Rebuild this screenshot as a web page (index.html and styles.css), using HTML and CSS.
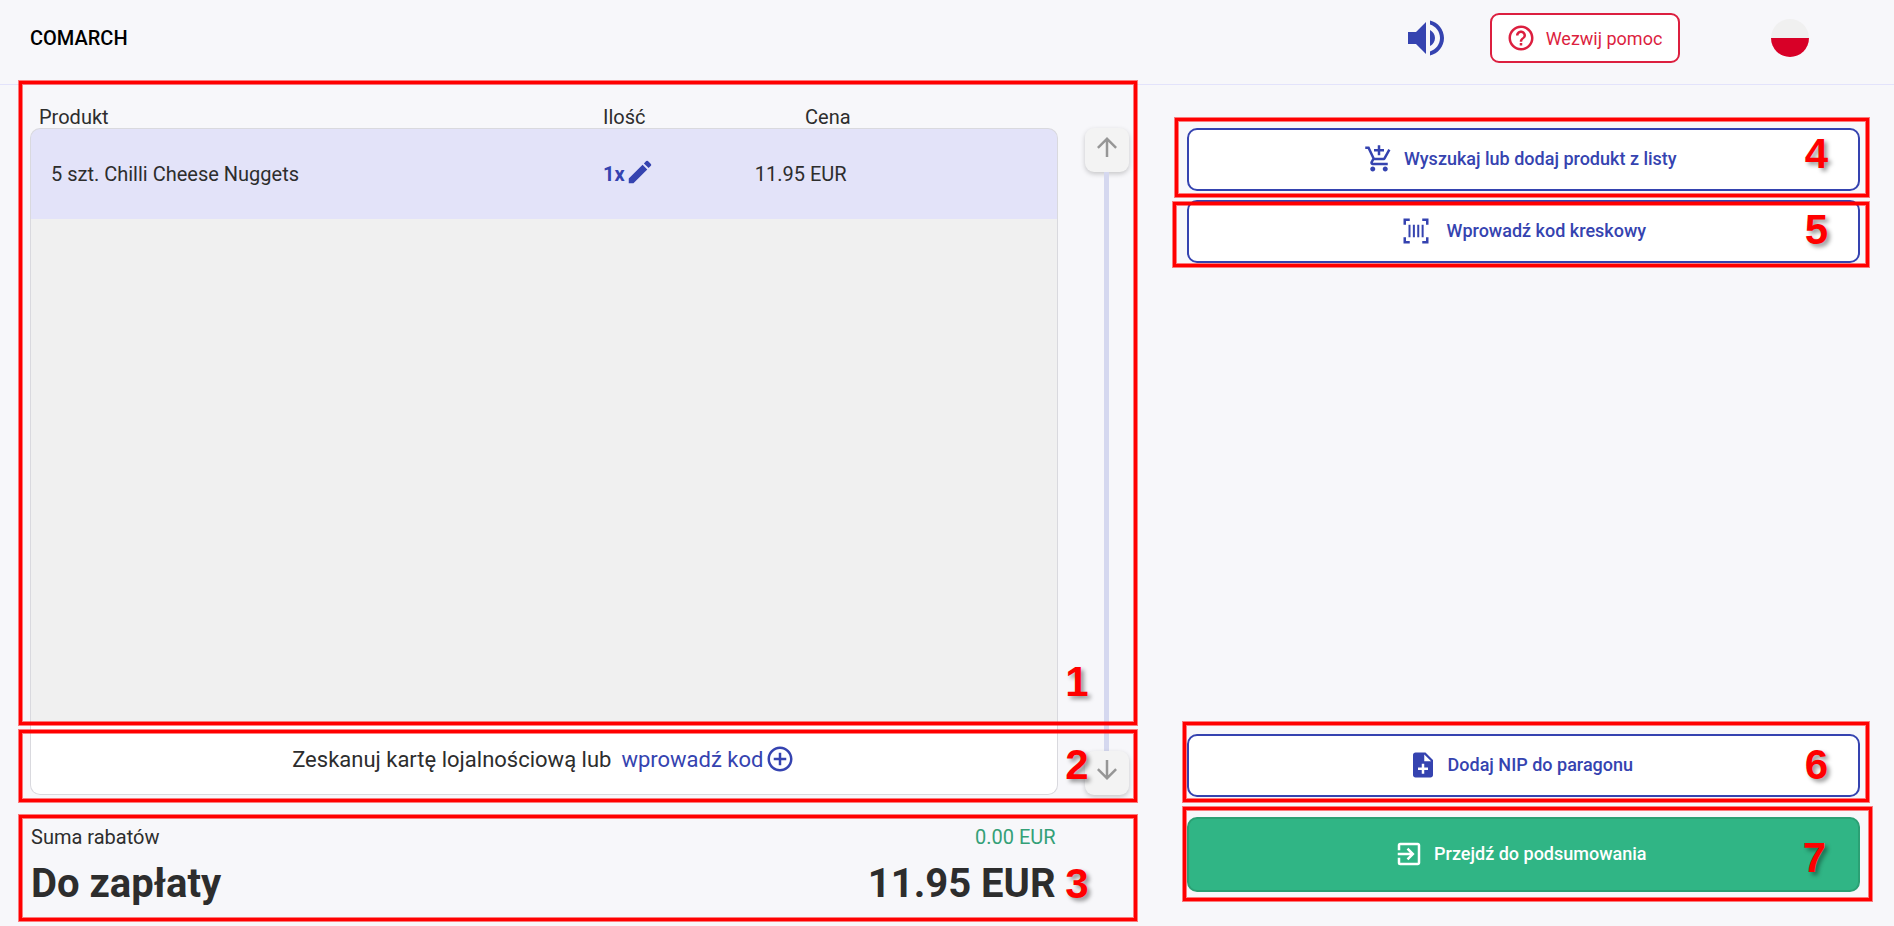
FILE: index.html
```html
<!DOCTYPE html>
<html lang="pl">
<head>
    <meta charset="UTF-8">
    <meta name="viewport" content="width=device-width, initial-scale=1.0">
    <title>Comarch - kasa samoobsługowa</title>
    <link rel="stylesheet" href="styles.css">
</head>
<body>

    <header class="topbar">
        <span class="brand">COMARCH</span>

        <button type="button" class="sound-btn" aria-label="Dźwięk">
            <svg class="icon-sound" viewBox="0 0 24 24"><path d="M3 9v6h4l5 5V4L7 9H3zm13.5 3c0-1.77-1.02-3.29-2.5-4.03v8.05c1.48-.73 2.5-2.25 2.5-4.02zM14 3.23v2.06c2.89.86 5 3.54 5 6.71s-2.11 5.85-5 6.71v2.06c4.01-.91 7-4.49 7-8.77s-2.99-7.86-7-8.77z"/></svg>
        </button>

        <button type="button" class="help-btn">
            <svg class="icon" viewBox="0 0 24 24"><path d="M11 18h2v-2h-2v2zm1-16C6.48 2 2 6.48 2 12s4.48 10 10 10 10-4.48 10-10S17.52 2 12 2zm0 18c-4.41 0-8-3.59-8-8s3.59-8 8-8 8 3.59 8 8-3.59 8-8 8zm0-14c-2.21 0-4 1.79-4 4h2c0-1.1.9-2 2-2s2 .9 2 2c0 2-3 1.75-3 5h2c0-2.25 3-2.5 3-5 0-2.21-1.79-4-4-4z"/></svg>
            Wezwij pomoc
        </button>

        <button type="button" class="flag-btn" aria-label="Polski"></button>
    </header>

    <main class="checkout">
        <section class="receipt">
            <div class="basket">
                <div class="list">
                    <table class="products">
                        <thead>
                            <tr>
                                <th class="name">Produkt</th>
                                <th class="qty">Ilość</th>
                                <th class="price">Cena</th>
                            </tr>
                        </thead>
                        <tbody>
                            <tr>
                                <td class="name">5 szt. Chilli Cheese Nuggets</td>
                                <td class="qty">
                                    <button type="button" class="qty-btn">1x<svg class="icon" viewBox="0 0 24 24"><path d="M3 17.25V21h3.75L17.81 9.94l-3.75-3.75L3 17.25zM20.71 7.04a1 1 0 0 0 0-1.41l-2.34-2.34a1 1 0 0 0-1.41 0l-1.83 1.83 3.75 3.75 1.83-1.83z"/></svg></button>
                                </td>
                                <td class="price">11.95 EUR</td>
                            </tr>
                        </tbody>
                    </table>
                    <div class="empty"></div>
                    <div class="loyalty">
                        Zeskanuj kartę lojalnościową lub
                        <a href="#" class="loyalty-link">wprowadź kod<svg class="icon" viewBox="0 0 24 24"><path d="M13 7h-2v4H7v2h4v4h2v-4h4v-2h-4V7zm-1-5C6.48 2 2 6.48 2 12s4.48 10 10 10 10-4.48 10-10S17.52 2 12 2zm0 18c-4.41 0-8-3.59-8-8s3.59-8 8-8 8 3.59 8 8-3.59 8-8 8z"/></svg></a>
                    </div>
                </div>

                <div class="scroller">
                    <button type="button" class="scroll-btn" aria-label="W górę">
                        <svg class="icon" viewBox="0 0 24 24"><path d="M4 12l1.41 1.41L11 7.83V20h2V7.83l5.58 5.59L20 12l-8-8-8 8z"/></svg>
                    </button>
                    <div class="track"></div>
                    <button type="button" class="scroll-btn" aria-label="W dół">
                        <svg class="icon" viewBox="0 0 24 24"><path d="M20 12l-1.41-1.41L13 16.17V4h-2v12.17l-5.58-5.59L4 12l8 8 8-8z"/></svg>
                    </button>
                </div>

                <div class="callout callout-1"><span>1</span></div>
                <div class="callout callout-2"><span>2</span></div>
            </div>

            <div class="totals">
                <div class="total-row discount">
                    <span>Suma rabatów</span>
                    <span class="amount">0.00 EUR</span>
                </div>
                <div class="total-row to-pay">
                    <span>Do zapłaty</span>
                    <span class="amount">11.95 EUR</span>
                </div>
                <div class="callout callout-3"><span>3</span></div>
            </div>
        </section>

        <section class="actions">
            <div class="action">
                <button type="button" class="action-btn">
                    <svg class="icon" viewBox="0 0 24 24"><path d="M11 9h2V6h3V4h-3V1h-2v3H8v2h3v3zm-4 9c-1.1 0-1.99.9-1.99 2S5.9 22 7 22s2-.9 2-2-.9-2-2-2zm10 0c-1.1 0-1.99.9-1.99 2s.89 2 1.99 2 2-.9 2-2-.9-2-2-2zm-9.83-3.25l.03-.12.9-1.63h7.45c.75 0 1.41-.41 1.75-1.03l3.86-7.01L19.42 4h-.01l-1.1 2-2.76 5H8.53l-.13-.27L6.16 6l-.95-2-.94-2H1v2h2l3.6 7.59-1.35 2.45c-.16.28-.25.61-.25.96 0 1.1.9 2 2 2h12v-2H7.42c-.13 0-.25-.11-.25-.25z"/></svg>
                    Wyszukaj lub dodaj produkt z listy
                </button>
                <div class="callout callout-4"><span>4</span></div>
            </div>
            <div class="action">
                <button type="button" class="action-btn barcode">
                    <svg class="icon" viewBox="0 0 24 24"><path d="M2 2h5v2H4v3H2zM17 2h5v5h-2V4h-3zM2 17h2v3h3v2H2zM20 17h2v5h-5v-2h3zM6 7h1.600v10H6zM9.500 7h1.600v10H9.500zM13 7h1.600v10H13zM16.500 7h1.600v10h-1.600z"/></svg>
                    Wprowadź kod kreskowy
                </button>
                <div class="callout callout-5"><span>5</span></div>
            </div>
            <div class="action bottom">
                <button type="button" class="action-btn">
                    <svg class="icon" viewBox="0 0 24 24"><path d="M14 2H6c-1.100 0-1.990.9-1.990 2L4 20c0 1.100.89 2 1.990 2H18c1.100 0 2-.9 2-2V8l-6-6zm2 14h-3v3h-2v-3H8v-2h3v-3h2v3h3v2zm-3-7V3.500L18.500 9H13z"/></svg>
                    Dodaj NIP do paragonu
                </button>
                <div class="callout callout-6"><span>6</span></div>
            </div>
            <div class="action summary">
                <button type="button" class="action-btn primary">
                    <svg class="icon" viewBox="0 0 24 24"><path d="M10.090 15.590L11.500 17l5-5-5-5-1.410 1.410L12.670 11H3v2h9.670l-2.580 2.590zM19 3H5a2 2 0 0 0-2 2v4h2V5h14v14H5v-4H3v4a2 2 0 0 0 2 2h14c1.100 0 2-.9 2-2V5c0-1.100-.9-2-2-2z"/></svg>
                    Przejdź do podsumowania
                </button>
                <div class="callout callout-7"><span>7</span></div>
            </div>
        </section>
    </main>

</body>
</html>
```
FILE: styles.css
```css
* {
    box-sizing: border-box;
}

body {
    display: flex;
    flex-direction: column;
    min-height: 100vh;
    margin: 0;
    font-family: Roboto, sans-serif;
    font-size: 20px;
    color: #2d2d2d;
    background-color: #f7f7fa;
}

button {
    font-family: inherit;
    cursor: pointer;
}

.icon {
    width: 30px;
    height: 30px;
    fill: currentColor;
    flex-shrink: 0;
}

/* top bar */
.topbar {
    display: flex;
    align-items: center;
    height: 85px;
    padding: 0 85px 8px 30px;
    border-bottom: 1px solid #e3e3fb;
}

.brand {
    margin-right: auto;
    font-weight: 500;
    color: #000;
}

.sound-btn {
    padding: 0;
    border: none;
    background: none;
    color: #3543b0;
}

.icon-sound {
    display: block;
    width: 48px;
    height: 48px;
    fill: currentColor;
}

.help-btn {
    display: flex;
    align-items: center;
    justify-content: center;
    gap: 10px;
    width: 190px;
    height: 50px;
    margin: 0 91px 0 40px;
    padding: 0 2px 0 0;
    border: 2px solid #dc1f3f;
    border-radius: 9px;
    background-color: #fff;
    color: #dc1f3f;
    font-size: 18px;
}

.flag-btn {
    width: 38px;
    height: 38px;
    padding: 0;
    border: none;
    border-radius: 50%;
    background: linear-gradient(#f0f0f0 50%, #d80027 50%);
}

/* main area */
.checkout {
    flex: 1;
    display: grid;
    grid-template-columns: 62fr 38fr;
    gap: 58px;
    padding: 0 34px 0 30px;
}

.receipt {
    display: flex;
    flex-direction: column;
}

.basket {
    position: relative;
    flex: 1;
    display: flex;
    gap: 27px;
}

.list {
    flex: 1;
    display: flex;
    flex-direction: column;
}

.products {
    width: 100%;
    table-layout: fixed;
    border-spacing: 0;
}

.products th {
    height: 43px;
    padding: 0;
    font-weight: 400;
    text-align: left;
    vertical-align: bottom;
    line-height: 22px;
}

.products td {
    height: 91px;
    padding: 0;
    border-top: 1px solid #d9d9de;
    background-color: #e3e3f9;
}

.products .name {
    width: 573px;
    padding-left: 9px;
}

.products .qty {
    width: 13%;
}

.products .price {
    padding-right: 207px;
    text-align: right;
}

.products td.name {
    padding-left: 20px;
    border-left: 1px solid #d9d9de;
    border-top-left-radius: 10px;
}

.products td.price {
    padding-right: 210px;
    border-right: 1px solid #d9d9de;
    border-top-right-radius: 10px;
}

.qty-btn {
    display: flex;
    align-items: center;
    padding: 0;
    border: none;
    background: none;
    color: #3543b0;
    font-size: 20px;
    font-weight: 700;
}

.qty-btn .icon {
    margin-bottom: 4px;
}

.empty {
    flex: 1;
    border: solid #d9d9de;
    border-width: 0 1px;
    background-color: #f0f0f0;
}

.loyalty {
    display: flex;
    align-items: center;
    justify-content: center;
    gap: 10px;
    height: 71px;
    border: 1px solid #d9d9de;
    border-top: none;
    border-radius: 0 0 10px 10px;
    background-color: #fff;
    font-size: 22px;
}

.loyalty-link {
    display: flex;
    align-items: center;
    gap: 2px;
    color: #3543b0;
    text-decoration: none;
}

.scroller {
    display: flex;
    flex-direction: column;
    align-items: center;
    padding-top: 43px;
}

.scroll-btn {
    display: flex;
    justify-content: center;
    width: 44px;
    height: 44px;
    padding: 4px 0 0;
    border: none;
    border-radius: 9px;
    background-color: #f3f3f3;
    box-shadow: 0 2px 5px rgba(0, 0, 0, 0.2);
    color: #969696;
}

.track {
    flex: 1;
    width: 5px;
    background-color: #d5d8ef;
}

/* totals */
.totals {
    position: relative;
    height: 131px;
    padding: 30px 73px 0 1px;
}

.total-row {
    display: flex;
    justify-content: space-between;
}

.discount {
    line-height: 24px;
}

.discount .amount {
    color: #34a077;
}

.to-pay {
    margin-top: 11px;
    font-size: 40px;
    font-weight: 700;
    line-height: 48px;
}

/* buttons on the right */
.actions {
    display: flex;
    flex-direction: column;
    gap: 9px;
    padding: 43px 0 34px;
}

.action {
    position: relative;
}

.action.bottom {
    margin-top: auto;
}

.action.summary {
    margin-top: 11px;
}

.action-btn {
    display: flex;
    align-items: center;
    justify-content: center;
    gap: 10px;
    width: 100%;
    height: 63px;
    padding: 0 6px 2px 0;
    border: 2px solid #3543b0;
    border-radius: 10px;
    background-color: #fff;
    color: #3543b0;
    font-size: 18px;
    font-weight: 500;
}

.action-btn.barcode {
    gap: 16px;
    padding-right: 0;
}

.action-btn.primary {
    height: 75px;
    border-color: #2ba074;
    background-color: #30b585;
    color: #fff;
}

/* numbered red frames */
.callout {
    position: absolute;
    border: 3px solid #f00;
    box-shadow: 0 0 0 1px rgba(255, 0, 0, 0.5), inset 0 0 0 1px rgba(255, 0, 0, 0.5);
    pointer-events: none;
}

.callout span {
    position: absolute;
    right: 38px;
    bottom: 13px;
    color: #f00;
    font-family: "Liberation Sans", Arial, sans-serif;
    font-size: 42px;
    font-weight: 700;
    line-height: 42px;
    text-shadow: 3px 3px 4px rgba(0, 0, 0, 0.4);
}

.callout-1,
.callout-2,
.callout-3 {
    left: -11px;
    right: -8px;
}

.callout-1 span,
.callout-2 span,
.callout-3 span {
    right: 45px;
}

.callout-1 {
    top: -4px;
    bottom: 70px;
}

.callout-2 {
    height: 72px;
    bottom: -7px;
}

.callout-3 {
    top: 20px;
    bottom: 5px;
}

.callout-4 {
    inset: -10px -9px -6px -12px;
}

.callout-5 {
    inset: 2px -9px -4px -14px;
}

.callout-6 {
    inset: -12px -9px -5px -4px;
}

.callout-7 {
    inset: -10px -12px -9px -4px;
}

.callout-1 span,
.callout-4 span,
.callout-7 span {
    bottom: 19px;
}

.callout-7 span {
    right: 43px;
}
```
